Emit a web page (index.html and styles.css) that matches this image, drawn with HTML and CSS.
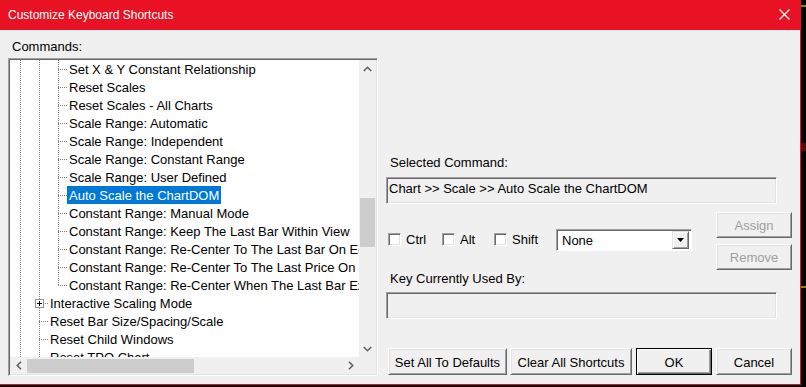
FILE: index.html
```html
<!DOCTYPE html>
<html lang="en">
<head>
    <meta charset="UTF-8">
    <title>Customize Keyboard Shortcuts</title>
    <link rel="stylesheet" href="styles.css">
</head>
<body>
<div class="screen">
    <div class="window">
        <div class="titlebar">
            <span class="title">Customize Keyboard Shortcuts</span>
            <svg class="close" width="11" height="11" viewBox="0 0 11 11">
                <path d="M0.5 0.5 L10.5 10.5 M10.5 0.5 L0.5 10.5" stroke="#fff" stroke-width="1.2" fill="none"/>
            </svg>
        </div>

        <div class="dialog">
            <div class="left-col">
                <div class="label">Commands:</div>
                <div class="tree">
                    <div class="tree-view">
                        <div class="row"><span class="ind"></span><span class="ind"></span><span class="conn"></span><span class="txt">Set X &amp; Y Constant Relationship</span></div>
                        <div class="row"><span class="ind"></span><span class="ind"></span><span class="conn"></span><span class="txt">Reset Scales</span></div>
                        <div class="row"><span class="ind"></span><span class="ind"></span><span class="conn"></span><span class="txt">Reset Scales - All Charts</span></div>
                        <div class="row"><span class="ind"></span><span class="ind"></span><span class="conn"></span><span class="txt">Scale Range: Automatic</span></div>
                        <div class="row"><span class="ind"></span><span class="ind"></span><span class="conn"></span><span class="txt">Scale Range: Independent</span></div>
                        <div class="row"><span class="ind"></span><span class="ind"></span><span class="conn"></span><span class="txt">Scale Range: Constant Range</span></div>
                        <div class="row"><span class="ind"></span><span class="ind"></span><span class="conn"></span><span class="txt">Scale Range: User Defined</span></div>
                        <div class="row"><span class="ind"></span><span class="ind"></span><span class="conn"></span><span class="txt selected">Auto Scale the ChartDOM</span></div>
                        <div class="row"><span class="ind"></span><span class="ind"></span><span class="conn"></span><span class="txt">Constant Range: Manual Mode</span></div>
                        <div class="row"><span class="ind"></span><span class="ind"></span><span class="conn"></span><span class="txt">Constant Range: Keep The Last Bar Within View</span></div>
                        <div class="row"><span class="ind"></span><span class="ind"></span><span class="conn"></span><span class="txt">Constant Range: Re-Center To The Last Bar On Edge</span></div>
                        <div class="row"><span class="ind"></span><span class="ind"></span><span class="conn"></span><span class="txt">Constant Range: Re-Center To The Last Price On Edge</span></div>
                        <div class="row"><span class="ind"></span><span class="ind"></span><span class="conn last"></span><span class="txt">Constant Range: Re-Center When The Last Bar Exits View</span></div>
                        <div class="row"><span class="ind"></span><span class="conn"><span class="plus"></span></span><span class="txt">Interactive Scaling Mode</span></div>
                        <div class="row"><span class="ind"></span><span class="conn"></span><span class="txt">Reset Bar Size/Spacing/Scale</span></div>
                        <div class="row"><span class="ind"></span><span class="conn"></span><span class="txt">Reset Child Windows</span></div>
                        <div class="row"><span class="ind"></span><span class="conn"></span><span class="txt">Reset TPO Chart</span></div>
                    </div>
                    <div class="vscroll">
                        <div class="arrow">
                            <svg width="9" height="6" viewBox="0 0 9 6"><polyline points="0.8,5 4.5,1.3 8.2,5" fill="none" stroke="#606060" stroke-width="1.6"/></svg>
                        </div>
                        <div class="vthumb"></div>
                        <div class="arrow bottom">
                            <svg width="9" height="6" viewBox="0 0 9 6"><polyline points="0.8,1 4.5,4.7 8.2,1" fill="none" stroke="#606060" stroke-width="1.6"/></svg>
                        </div>
                    </div>
                    <div class="hscroll">
                        <div class="arrow">
                            <svg width="6" height="9" viewBox="0 0 6 9"><polyline points="5,0.8 1.3,4.5 5,8.2" fill="none" stroke="#606060" stroke-width="1.6"/></svg>
                        </div>
                        <div class="hthumb"></div>
                        <div class="arrow right">
                            <svg width="6" height="9" viewBox="0 0 6 9"><polyline points="1,0.8 4.7,4.5 1,8.2" fill="none" stroke="#606060" stroke-width="1.6"/></svg>
                        </div>
                    </div>
                    <div class="corner"></div>
                </div>
            </div>

            <div class="right-col">
                <div class="label first">Selected Command:</div>
                <div class="textbox">Chart &gt;&gt; Scale &gt;&gt; Auto Scale the ChartDOM</div>

                <div class="key-row">
                    <div class="mods">
                        <label class="check w-ctrl"><span class="box"></span>Ctrl</label>
                        <label class="check w-alt"><span class="box"></span>Alt</label>
                        <label class="check w-shift"><span class="box"></span>Shift</label>
                        <div class="select">
                            <span class="select-value">None</span>
                            <span class="select-btn">
                                <svg width="7" height="4" viewBox="0 0 7 4"><polygon points="0,0 7,0 3.5,4" fill="#000"/></svg>
                            </span>
                        </div>
                    </div>
                    <div class="side-buttons">
                        <button class="btn disabled tall">Assign</button>
                        <button class="btn disabled">Remove</button>
                    </div>
                </div>

                <div class="label">Key Currently Used By:</div>
                <div class="textbox used-by"></div>

                <div class="bottom-buttons">
                    <button class="btn b-defaults">Set All To Defaults</button>
                    <button class="btn b-clear">Clear All Shortcuts</button>
                    <button class="btn default b-ok">OK</button>
                    <button class="btn b-cancel">Cancel</button>
                </div>
            </div>
        </div>
    </div>
    <div class="edge">
        <span class="tick"></span>
        <span class="tick red"></span>
        <span class="tick lower"></span>
    </div>
</div>
</body>
</html>
```

FILE: styles.css
```css
body {
    margin: 0;
    background: #000;
    font-family: "Liberation Sans", Arial, sans-serif;
    font-size: 13px;
    color: #000;
}
.screen {
    display: flex;
    width: 806px;
    height: 387px;
    overflow: hidden;
    background: #000;
}
.window {
    width: 800px;
    height: 384px;
    background: #f0f0f0;
    border-right: 1px solid #e81123;
    border-bottom: 1px solid #e81123;
    display: flex;
    flex-direction: column;
}
.titlebar {
    height: 30px;
    flex: none;
    background: #e81224;
    display: flex;
    align-items: center;
    justify-content: space-between;
    padding: 0 10px 0 8px;
}
.title {
    color: #fff;
    font-size: 12px;
}
.close {
    margin-top: -1px;
}
.edge {
    width: 5px;
    display: flex;
    flex-direction: column;
}
.tick {
    height: 2px;
    margin-top: 5px;
    background: #8c8200;
}
.tick.red {
    margin-top: 136px;
    height: 8px;
    background: #5a0a0a;
}
.tick.lower {
    margin-top: 135px;
}

/* dialog body */
.dialog {
    display: flex;
    height: 354px;
    padding-left: 8px;
}
.label {
    height: 16px;
    line-height: 18px;
    padding-left: 4px;
    white-space: nowrap;
}
.left-col {
    width: 370px;
    flex: none;
}
.left-col .label {
    margin-top: 8px;
}

/* tree */
.tree {
    margin-top: 4px;
    height: 318px;
    box-sizing: border-box;
    border: 1px solid;
    border-color: #a0a0a0 #fff #fff #a0a0a0;
    padding: 1px;
    box-shadow: inset 1px 1px 0 #696969, inset -1px -1px 0 #e3e3e3;
    display: grid;
    grid-template-columns: 1fr 17px;
    grid-template-rows: 1fr 17px;
}
.tree-view {
    background: #fff;
    overflow: hidden;
}
.row {
    display: flex;
    height: 18px;
    padding-left: 10px;
    white-space: nowrap;
}
.ind, .conn {
    flex: none;
    height: 18px;
    background: repeating-linear-gradient(to bottom, #808080 0 1px, transparent 1px 2px) left top / 1px 100% no-repeat;
}
.ind {
    width: 19px;
}
.conn {
    width: 9px;
    display: flex;
    align-items: center;
    background:
        repeating-linear-gradient(to right, #808080 0 1px, transparent 1px 2px) left 9px / 100% 1px no-repeat,
        repeating-linear-gradient(to bottom, #808080 0 1px, transparent 1px 2px) left top / 1px 100% no-repeat;
}
.conn.last {
    background:
        repeating-linear-gradient(to right, #808080 0 1px, transparent 1px 2px) left 9px / 100% 1px no-repeat,
        repeating-linear-gradient(to bottom, #808080 0 1px, transparent 1px 2px) left top / 1px 10px no-repeat;
}
.plus {
    width: 9px;
    height: 9px;
    box-sizing: border-box;
    margin-left: -4px;
    border: 1px solid #919191;
    background:
        linear-gradient(#000, #000) 1px 3px / 5px 1px no-repeat,
        linear-gradient(#000, #000) 3px 1px / 1px 5px no-repeat,
        #fff;
}
.txt {
    height: 18px;
    box-sizing: border-box;
    padding: 1px 2px 0 2px;
    line-height: 17px;
}
.txt.selected {
    background: #0078d7;
    color: #fff;
}
.vscroll {
    background: #f0f0f0;
    display: flex;
    flex-direction: column;
}
.arrow {
    width: 17px;
    height: 17px;
    flex: none;
    display: flex;
    align-items: center;
    justify-content: center;
}
.arrow.bottom {
    margin-top: auto;
}
.arrow.right {
    margin-left: auto;
}
.vthumb {
    margin: 121px 1px 0 1px;
    height: 49px;
    background: #cdcdcd;
}
.hscroll {
    background: #f0f0f0;
    display: flex;
    align-items: center;
}
.hthumb {
    width: 167px;
    height: 14px;
    background: #cdcdcd;
}
.corner {
    background: #f0f0f0;
}

/* right side */
.right-col {
    width: 406px;
    margin-left: 8px;
    display: flex;
    flex-direction: column;
}
.label.first {
    margin-top: 124px;
}
.textbox {
    margin-top: 7px;
    width: 391px;
    height: 27px;
    box-sizing: border-box;
    border: 1px solid;
    border-color: #a0a0a0 #fff #fff #a0a0a0;
    box-shadow: inset 1px 1px 0 #696969, inset -1px -1px 0 #e3e3e3;
    padding: 2px 0 0 2px;
    line-height: 17px;
    white-space: nowrap;
}
.textbox.used-by {
    margin-top: 6px;
}
.key-row {
    margin-top: 8px;
    height: 58px;
    display: flex;
    justify-content: space-between;
}
.mods {
    margin-top: 17px;
    padding-left: 2px;
    height: 21px;
    display: flex;
    align-items: center;
}
.check {
    display: flex;
    align-items: center;
    gap: 5px;
}
.w-ctrl { width: 54px; }
.w-alt { width: 52px; }
.w-shift { width: 62px; }
.box {
    width: 13px;
    height: 13px;
    box-sizing: border-box;
    background: #fff;
    border: 1px solid;
    border-color: #a0a0a0 #fff #fff #a0a0a0;
    box-shadow: inset 1px 1px 0 #696969, inset -1px -1px 0 #e3e3e3;
}
.select {
    width: 136px;
    height: 22px;
    box-sizing: border-box;
    background: #fff;
    border: 1px solid;
    border-color: #a0a0a0 #fff #fff #a0a0a0;
    box-shadow: inset 1px 1px 0 #696969;
    padding: 2px;
    display: flex;
    align-items: center;
}
.select-value {
    flex: 1;
    padding: 1px 0 0 3px;
}
.select-btn {
    width: 17px;
    height: 18px;
    box-sizing: border-box;
    background: #f0f0f0;
    border: 1px solid;
    border-color: #e3e3e3 #696969 #696969 #e3e3e3;
    box-shadow: inset 1px 1px 0 #fff, inset -1px -1px 0 #a0a0a0;
    display: flex;
    align-items: center;
    justify-content: center;
}
.side-buttons {
    display: flex;
    flex-direction: column;
    gap: 6px;
}
.btn {
    font-family: "Liberation Sans", Arial, sans-serif;
    font-size: 13px;
    color: #000;
    height: 27px;
    width: 76px;
    padding: 1px 0 0 0;
    background: #f0f0f0;
    border: 1px solid;
    border-color: #fff #696969 #696969 #fff;
    box-shadow: inset 1px 1px 0 #e3e3e3, inset -1px -1px 0 #a0a0a0;
}
.btn.tall {
    height: 28px;
}
.btn.disabled {
    color: #a0a0a0;
}
.btn.default {
    border-color: #000;
    box-shadow: inset 1px 1px 0 #fff, inset -1px -1px 0 #696969, inset -2px -2px 0 #a0a0a0;
}
.bottom-buttons {
    margin-top: 29px;
    display: flex;
}
.b-defaults { width: 119px; margin-left: 2px; }
.b-clear { width: 122px; margin-left: 3px; }
.b-ok { margin-left: 4px; }
.b-cancel { margin-left: 4px; }
```
